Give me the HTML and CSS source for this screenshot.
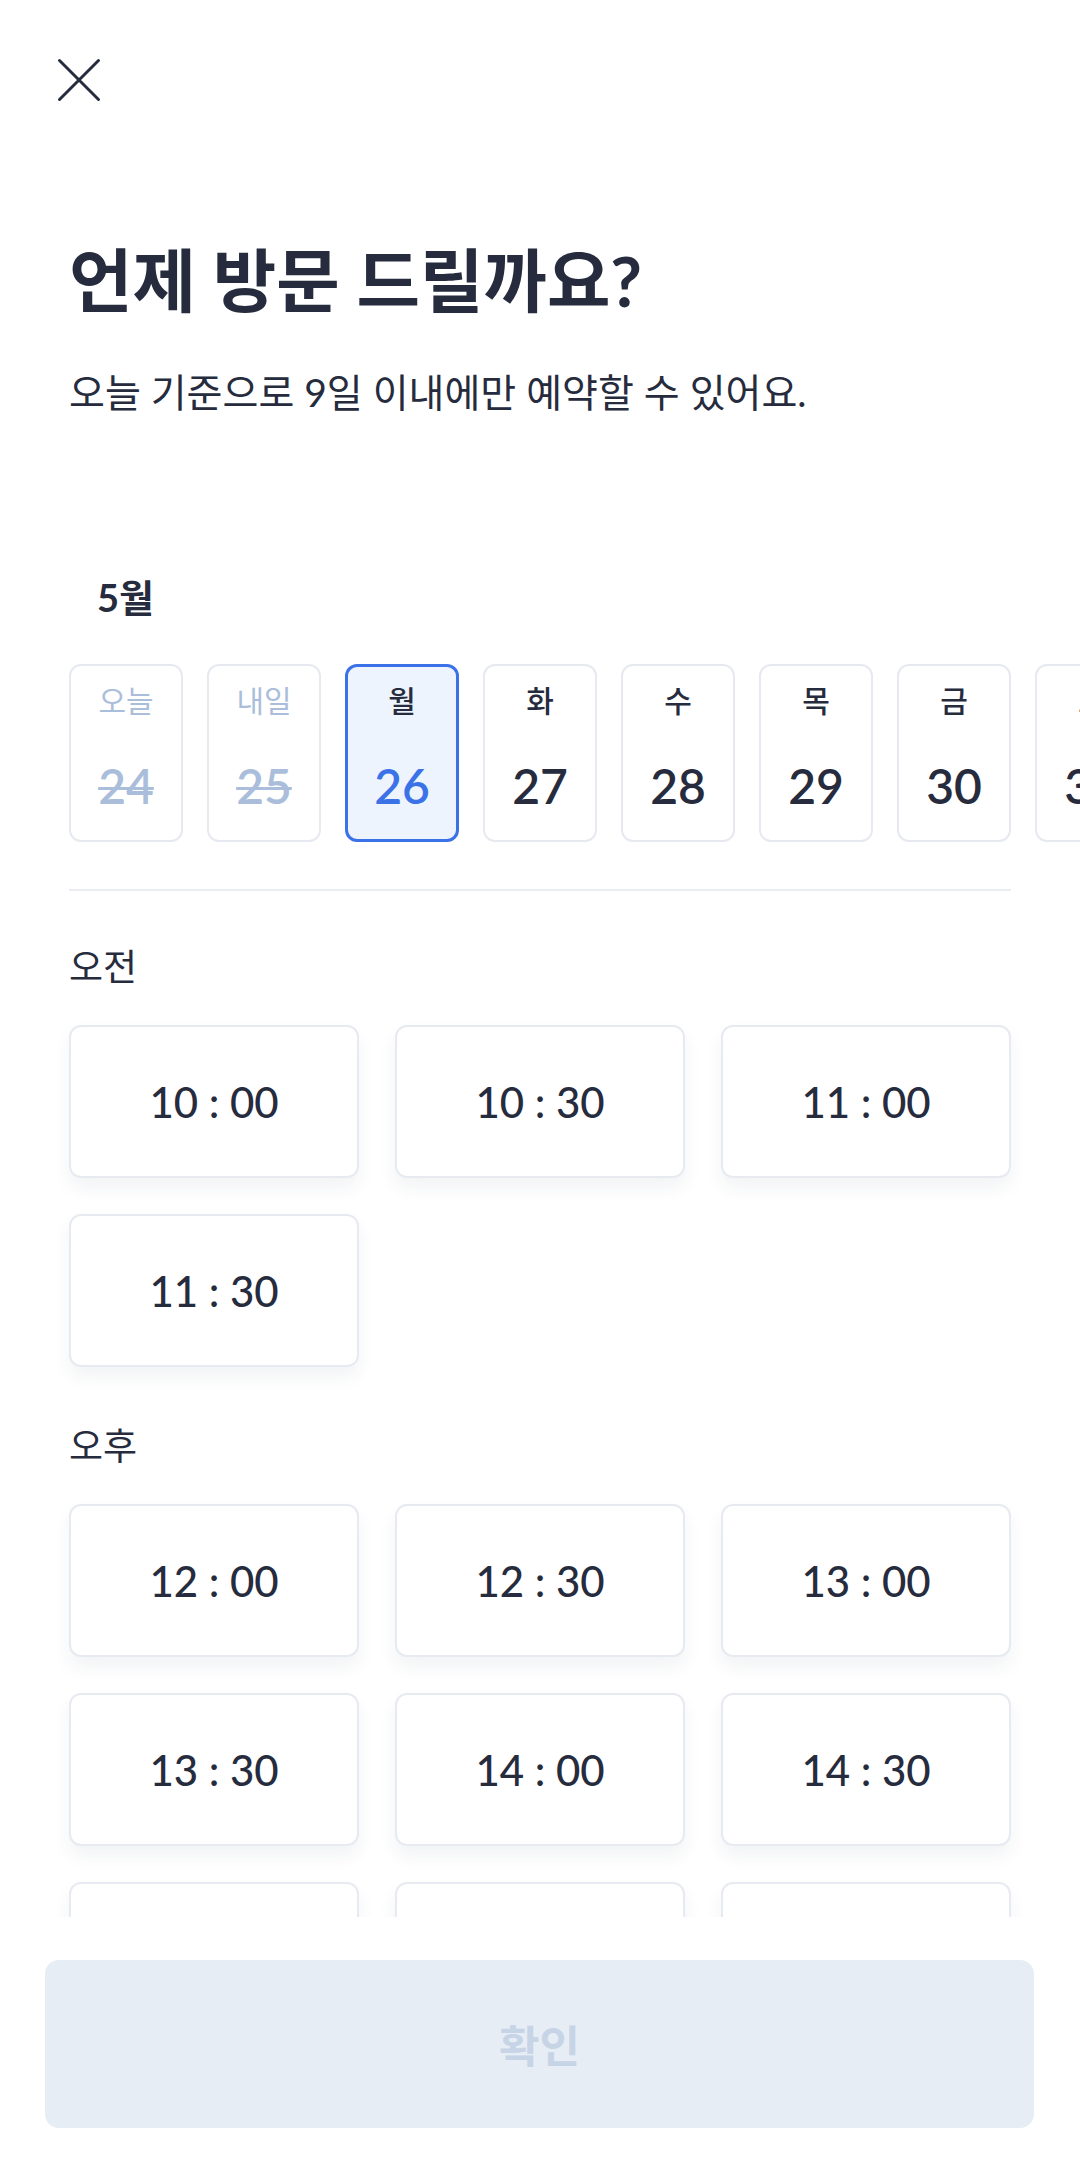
FILE: index.html
```html
<!DOCTYPE html>
<html lang="ko">
<head>
<meta charset="utf-8">
<title>방문 예약</title>
<link rel="stylesheet" href="styles.css">
</head>
<body>
<div class="screen">
  <div class="scroll">
    <header class="top">
      <button class="close" aria-label="닫기">
        <svg width="44" height="44" viewBox="0 0 44 44"><path d="M2.5 2.5 L41.5 41.5 M41.5 2.5 L2.5 41.5" stroke="#262c3d" stroke-width="3" stroke-linecap="round" fill="none"/></svg>
      </button>
    </header>
    <h1 class="title">언제 방문 드릴까요?</h1>
    <p class="sub">오늘 기준으로 9일 이내에만 예약할 수 있어요.</p>

    <div class="month">5월</div>
    <div class="dates">
      <div class="date off"><span class="dow">오늘</span><span class="num">24</span></div>
      <div class="date off"><span class="dow">내일</span><span class="num">25</span></div>
      <div class="date sel"><span class="dow">월</span><span class="num">26</span></div>
      <div class="date"><span class="dow">화</span><span class="num">27</span></div>
      <div class="date"><span class="dow">수</span><span class="num">28</span></div>
      <div class="date"><span class="dow">목</span><span class="num">29</span></div>
      <div class="date"><span class="dow">금</span><span class="num">30</span></div>
      <div class="date"><span class="dow">토</span><span class="num">31</span></div>
    </div>
    <hr class="divider">

    <section class="period">
      <h2 class="plabel">오전</h2>
      <div class="slots">
        <div class="slot">10 : 00</div>
        <div class="slot">10 : 30</div>
        <div class="slot">11 : 00</div>
        <div class="slot">11 : 30</div>
      </div>
    </section>
    <section class="period">
      <h2 class="plabel">오후</h2>
      <div class="slots">
        <div class="slot">12 : 00</div>
        <div class="slot">12 : 30</div>
        <div class="slot">13 : 00</div>
        <div class="slot">13 : 30</div>
        <div class="slot">14 : 00</div>
        <div class="slot">14 : 30</div>
        <div class="slot"></div>
        <div class="slot"></div>
        <div class="slot"></div>
      </div>
    </section>
  </div>
  <div class="footer">
    <button class="confirm" disabled>확인</button>
  </div>
</div>
</body>
</html>
```
FILE: styles.css
```css
* { box-sizing: border-box; }
html, body { margin: 0; padding: 0; background: #fff; }
body {
  font-family: Lato, "Noto Sans CJK KR", "Noto Sans", sans-serif;
  color: #262c3d;
}
.screen {
  width: 1080px;
  height: 2173px;
  display: flex;
  flex-direction: column;
  overflow: hidden;
}
.scroll {
  height: 1917px;
  overflow: hidden;
  flex: none;
}
.top {
  padding: 58px 0 0 57px;
  height: 102px;
}
.close {
  border: 0;
  background: none;
  padding: 0;
  width: 44px;
  height: 44px;
  display: block;
}
.close svg { display: block; }
.title {
  margin: 136px 0 0 69px;
  font-size: 69px;
  line-height: 86px;
  font-weight: 700;
}
.sub {
  margin: 41px 0 0 69px;
  font-size: 39px;
  line-height: 54px;
  font-weight: 400;
}
.month {
  margin: 152px 0 0 97px;
  font-size: 38px;
  line-height: 52px;
  font-weight: 700;
}
.dates {
  margin-top: 41px;
  padding-left: 69px;
  display: flex;
  gap: 24px;
  overflow: hidden;
}
.date {
  flex: none;
  width: 114px;
  height: 178px;
  border: 2px solid #e6e9ef;
  border-radius: 12px;
  display: flex;
  flex-direction: column;
  align-items: center;
  padding-top: 12px;
}
.dow {
  font-size: 30px;
  line-height: 44px;
  font-weight: 500;
}
.num {
  margin-top: 36px;
  font-size: 48px;
  line-height: 56px;
  font-weight: 600;
}
.date.off { color: #aabedb; }
.date.off .dow { font-weight: 400; }
.date.off .num { text-decoration: line-through; text-decoration-thickness: 3px; }
.date.sel {
  border: 3px solid #3b72e8;
  background: #eef4fe;
  padding-top: 11px;
}
.date.sel .num { color: #3b72e8; }
.divider {
  margin: 47px 69px 0;
  border: 0;
  height: 2px;
  background: #e9edf3;
}
.period { padding: 0 69px; }
.plabel {
  margin: 51px 0 0;
  font-size: 37px;
  line-height: 50px;
  font-weight: 400;
}
.period + .period .plabel { margin-top: 54px; }
.slots {
  margin-top: 33px;
  display: grid;
  grid-template-columns: repeat(3, 1fr);
  column-gap: 36px;
  row-gap: 36px;
}
.slot {
  height: 153px;
  border: 2px solid #e7eaf0;
  border-radius: 12px;
  background: #fff;
  box-shadow: 0 10px 18px rgba(30, 45, 80, 0.06);
  display: flex;
  align-items: center;
  justify-content: center;
  font-size: 42px;
  font-weight: 500;
}
.footer {
  padding: 43px 46px 45px 45px;
}
.confirm {
  width: 100%;
  height: 168px;
  border: 0;
  border-radius: 14px;
  background: #e7edf5;
  color: #c6d4e6;
  font-family: "Noto Sans CJK KR", sans-serif;
  font-size: 44px;
  font-weight: 700;
  display: block;
}
```
